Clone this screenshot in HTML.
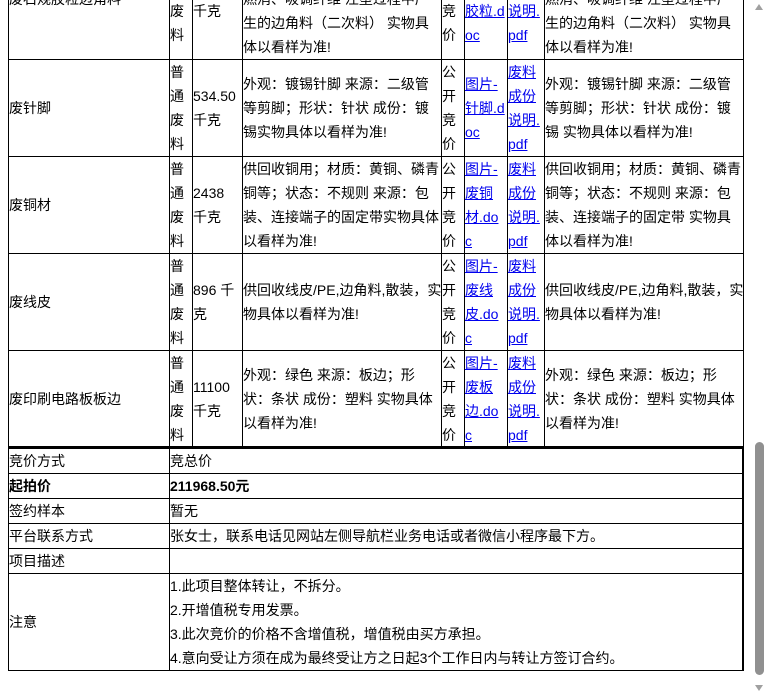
<!DOCTYPE html>
<html><head><meta charset="utf-8"><style>
body{margin:0;width:767px;height:693px;overflow:hidden;background:#fff;position:relative;font-family:"Liberation Sans","Noto Sans CJK SC",sans-serif;font-size:14px;color:#000}
.c{position:absolute;display:flex;align-items:center;line-height:24px;white-space:nowrap;padding-left:1px;box-sizing:border-box;overflow:visible}
.h{position:absolute;background:#000;height:1px}
.v{position:absolute;background:#000;width:1px}
a{color:#00e;text-decoration:underline}
</style></head><body>
<div class="v" style="left:8px;top:0;height:671px"></div>
<div class="v" style="left:169px;top:0;height:671px"></div>
<div class="v" style="left:192px;top:0;height:447px"></div>
<div class="v" style="left:242px;top:0;height:447px"></div>
<div class="v" style="left:441px;top:0;height:447px"></div>
<div class="v" style="left:464px;top:0;height:447px"></div>
<div class="v" style="left:507px;top:0;height:447px"></div>
<div class="v" style="left:544px;top:0;height:447px"></div>
<div class="v" style="left:743px;top:0;height:447px"></div>
<div class="v" style="left:742px;top:447px;height:224px;width:2px"></div>
<div class="h" style="left:8px;width:736px;top:59px"></div>
<div class="h" style="left:8px;width:736px;top:156px"></div>
<div class="h" style="left:8px;width:736px;top:253px"></div>
<div class="h" style="left:8px;width:736px;top:350px"></div>
<div class="h" style="left:8px;width:736px;top:446px;height:3px"></div>
<div class="h" style="left:8px;width:736px;top:473px"></div>
<div class="h" style="left:8px;width:736px;top:498px"></div>
<div class="h" style="left:8px;width:736px;top:523px"></div>
<div class="h" style="left:8px;width:736px;top:548px"></div>
<div class="h" style="left:8px;width:736px;top:573px"></div>
<div class="h" style="left:8px;width:736px;top:670px"></div>

<div class="c" style="left:8px;top:-62px;width:161px;height:121px">废石规胶粒边角料</div>
<div class="c" style="left:169px;top:-62px;width:23px;height:121px">普<br>通<br>废<br>料</div>
<div class="c" style="left:192px;top:-62px;width:50px;height:121px">1200<br>千克</div>
<div class="c" style="left:242px;top:-62px;width:199px;height:121px">外观：白色 来源：光纤<br>外壳、保护套；成份：聚<br>燃消、吸调纤维 注塑过程中产<br>生的边角料（二次料） 实物具<br>体以看样为准!</div>
<div class="c" style="left:441px;top:-62px;width:23px;height:121px">公<br>开<br>竞<br>价</div>
<div class="c" style="left:464px;top:-62px;width:43px;height:121px"><a>图片-<br>废石规<br>胶粒.d<br>oc</a></div>
<div class="c" style="left:507px;top:-62px;width:37px;height:121px"><a>废料<br>成份<br>说明.<br>pdf</a></div>
<div class="c" style="left:544px;top:-62px;width:199px;height:121px">外观：白色 来源：光纤<br>外壳、保护套；成份：聚<br>燃消、吸调纤维 注塑过程中产<br>生的边角料（二次料） 实物具<br>体以看样为准!</div>

<div class="c" style="left:8px;top:59px;width:161px;height:97px">废针脚</div>
<div class="c" style="left:169px;top:59px;width:23px;height:97px">普<br>通<br>废<br>料</div>
<div class="c" style="left:192px;top:59px;width:50px;height:97px">534.50<br>千克</div>
<div class="c" style="left:242px;top:59px;width:199px;height:97px">外观：镀锡针脚 来源：二级管<br>等剪脚；形状：针状 成份：镀<br>锡实物具体以看样为准!</div>
<div class="c" style="left:441px;top:59px;width:23px;height:97px">公<br>开<br>竞<br>价</div>
<div class="c" style="left:464px;top:59px;width:43px;height:97px"><a>图片-<br>针脚.d<br>oc</a></div>
<div class="c" style="left:507px;top:59px;width:37px;height:97px"><a>废料<br>成份<br>说明.<br>pdf</a></div>
<div class="c" style="left:544px;top:59px;width:199px;height:97px">外观：镀锡针脚 来源：二级管<br>等剪脚；形状：针状 成份：镀<br>锡 实物具体以看样为准!</div>

<div class="c" style="left:8px;top:156px;width:161px;height:97px">废铜材</div>
<div class="c" style="left:169px;top:156px;width:23px;height:97px">普<br>通<br>废<br>料</div>
<div class="c" style="left:192px;top:156px;width:50px;height:97px">2438<br>千克</div>
<div class="c" style="left:242px;top:156px;width:199px;height:97px">供回收铜用；材质：黄铜、磷青<br>铜等；状态：不规则 来源：包<br>装、连接端子的固定带实物具体<br>以看样为准!</div>
<div class="c" style="left:441px;top:156px;width:23px;height:97px">公<br>开<br>竞<br>价</div>
<div class="c" style="left:464px;top:156px;width:43px;height:97px"><a>图片-<br>废铜<br>材.do<br>c</a></div>
<div class="c" style="left:507px;top:156px;width:37px;height:97px"><a>废料<br>成份<br>说明.<br>pdf</a></div>
<div class="c" style="left:544px;top:156px;width:199px;height:97px">供回收铜用；材质：黄铜、磷青<br>铜等；状态：不规则 来源：包<br>装、连接端子的固定带 实物具<br>体以看样为准!</div>

<div class="c" style="left:8px;top:253px;width:161px;height:97px">废线皮</div>
<div class="c" style="left:169px;top:253px;width:23px;height:97px">普<br>通<br>废<br>料</div>
<div class="c" style="left:192px;top:253px;width:50px;height:97px">896 千<br>克</div>
<div class="c" style="left:242px;top:253px;width:199px;height:97px">供回收线皮/PE,边角料,散装，实<br>物具体以看样为准!</div>
<div class="c" style="left:441px;top:253px;width:23px;height:97px">公<br>开<br>竞<br>价</div>
<div class="c" style="left:464px;top:253px;width:43px;height:97px"><a>图片-<br>废线<br>皮.do<br>c</a></div>
<div class="c" style="left:507px;top:253px;width:37px;height:97px"><a>废料<br>成份<br>说明.<br>pdf</a></div>
<div class="c" style="left:544px;top:253px;width:199px;height:97px">供回收线皮/PE,边角料,散装，实<br>物具体以看样为准!</div>

<div class="c" style="left:8px;top:350px;width:161px;height:97px">废印刷电路板板边</div>
<div class="c" style="left:169px;top:350px;width:23px;height:97px">普<br>通<br>废<br>料</div>
<div class="c" style="left:192px;top:350px;width:50px;height:97px">11100<br>千克</div>
<div class="c" style="left:242px;top:350px;width:199px;height:97px">外观：绿色 来源：板边；形<br>状：条状 成份：塑料 实物具体<br>以看样为准!</div>
<div class="c" style="left:441px;top:350px;width:23px;height:97px">公<br>开<br>竞<br>价</div>
<div class="c" style="left:464px;top:350px;width:43px;height:97px"><a>图片-<br>废板<br>边.do<br>c</a></div>
<div class="c" style="left:507px;top:350px;width:37px;height:97px"><a>废料<br>成份<br>说明.<br>pdf</a></div>
<div class="c" style="left:544px;top:350px;width:199px;height:97px">外观：绿色 来源：板边；形<br>状：条状 成份：塑料 实物具体<br>以看样为准!</div>

<div class="c" style="left:8px;top:448px;width:161px;height:25px">竞价方式</div>
<div class="c" style="left:169px;top:448px;width:560px;height:25px">竞总价</div>
<div class="c" style="left:8px;top:473px;width:161px;height:25px;font-weight:bold">起拍价</div>
<div class="c" style="left:169px;top:473px;width:560px;height:25px;font-weight:bold">211968.50元</div>
<div class="c" style="left:8px;top:498px;width:161px;height:25px">签约样本</div>
<div class="c" style="left:169px;top:498px;width:560px;height:25px">暂无</div>
<div class="c" style="left:8px;top:523px;width:161px;height:25px">平台联系方式</div>
<div class="c" style="left:169px;top:523px;width:570px;height:25px">张女士，联系电话见网站左侧导航栏业务电话或者微信小程序最下方。</div>
<div class="c" style="left:8px;top:548px;width:161px;height:25px">项目描述</div>
<div class="c" style="left:8px;top:573px;width:161px;height:97px">注意</div>
<div class="c" style="left:169px;top:573px;width:570px;height:97px">1.此项目整体转让，不拆分。<br>2.开增值税专用发票。<br>3.此次竞价的价格不含增值税，增值税由买方承担。<br>4.意向受让方须在成为最终受让方之日起3个工作日内与转让方签订合约。</div>

<div style="position:absolute;left:755px;top:442px;width:9px;height:233px;background:#909090;border-radius:5px"></div>
<div style="position:absolute;left:755px;top:4px;width:0;height:0;border-left:4.5px solid transparent;border-right:4.5px solid transparent;border-bottom:6px solid #a0a0a0"></div>
<div style="position:absolute;left:755px;top:685px;width:0;height:0;border-left:4.5px solid transparent;border-right:4.5px solid transparent;border-top:6px solid #a0a0a0"></div>
</body></html>
